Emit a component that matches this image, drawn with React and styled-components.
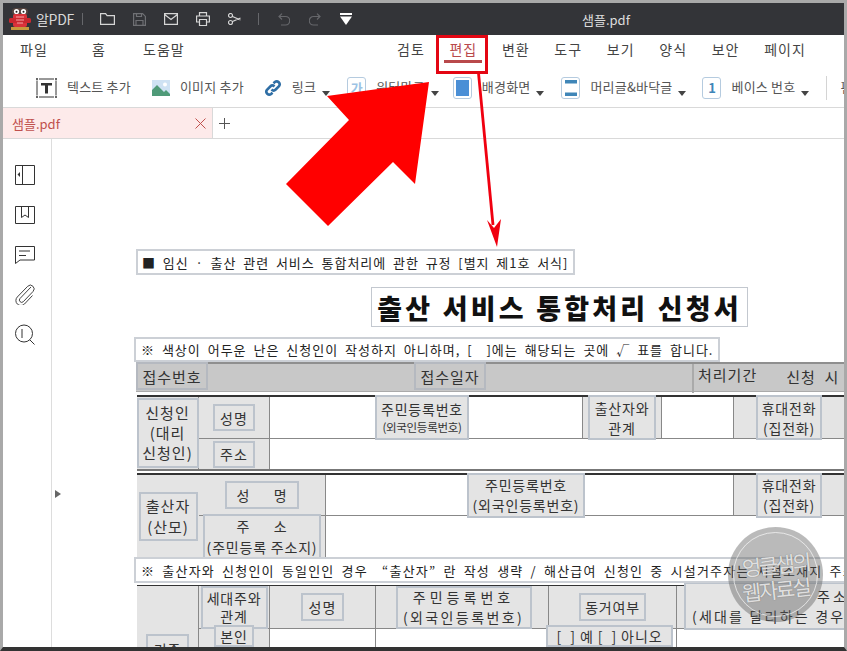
import styled, { createGlobalStyle } from "styled-components";

const GlobalStyle = createGlobalStyle`
  html, body { margin: 0; padding: 0; background: #fff; }
  body { font-family: "Noto Sans CJK KR", "Noto Sans", sans-serif; color: #333; }
`;

const menu_left = [
  { id: 0, name: "파일", width: 72 },
  { id: 1, name: "홈", width: 51 },
  { id: 2, name: "도움말", width: 60 },
];
const menu_right = ["검토", "편집", "변환", "도구", "보기", "양식", "보안", "페이지"];

const Stage = styled.div`
  position: relative;
  width: 847px;
  height: 651px;
  overflow: hidden;
`;
const Frame = styled.div`
  box-sizing: border-box;
  width: 847px;
  height: 651px;
  display: flex;
  flex-direction: column;
  border: 3px solid #a9a9a9;
  border-bottom: 4px solid #333;
  background: #fff;
`;

/* title bar */
const TitleBar = styled.header`
  flex: none;
  height: 32px;
  display: flex;
  align-items: center;
  background: #333438;
  color: #e8e8e8;
`;
const LogoSlot = styled.span`
  display: flex;
  margin-left: 6px;
`;
const AppName = styled.span`
  margin-left: 5px;
  font-size: 14px;
  letter-spacing: -0.3px;
  color: #d8d8d8;
`;
const BarDivider = styled.i`
  width: 1px;
  height: 12px;
  margin: ${({ $margin }) => $margin};
  background: #66676b;
`;
const BarIcons = styled.div`
  display: flex;
  align-items: center;
  gap: ${({ $gap }) => $gap}px;
`;
const FileTitle = styled.div`
  flex: 1;
  padding-left: 16px;
  text-align: center;
  font-size: 13px;
  color: #ddd;
`;

/* menu */
const MenuBar = styled.nav`
  flex: none;
  box-sizing: border-box;
  height: 33px;
  display: flex;
  align-items: center;
  padding: 0 0 6px 17px;
  font-size: 14px;
  letter-spacing: 1px;
  color: #444;
`;
const MenuLeft = styled.span`
  width: ${({ $width }) => $width}px;
`;
const MenuRight = styled.ul`
  display: flex;
  gap: 24.7px;
  margin: 0 0 0 194px;
  padding: 0;
  list-style: none;
`;
const MenuItem = styled.li`
  position: relative;
  color: ${({ $active }) => ($active ? "#b9494b" : "#444")};
  &::after {
    content: "";
    display: ${({ $active }) => ($active ? "block" : "none")};
    position: absolute;
    left: -5px;
    right: -5px;
    bottom: -4px;
    height: 3px;
    background: #b9494b;
  }
`;

/* toolbar */
const ToolBar = styled.div`
  flex: none;
  height: 39px;
  display: flex;
  align-items: center;
  padding-left: 33px;
  border-bottom: 1px solid #d9d9d9;
  overflow: hidden;
  white-space: nowrap;
`;
const ToolItem = styled.div`
  flex: none;
  display: flex;
  align-items: center;
  margin-right: ${({ $gap }) => $gap}px;
`;
const ToolLabel = styled.span`
  margin-left: 10px;
  font-size: 13px;
  letter-spacing: 0.2px;
  color: #555;
  transform: translateY(-1px);
`;
const Caret = styled.i`
  width: 0;
  height: 0;
  margin: 12px 0 0 6px;
  border-left: 4.5px solid transparent;
  border-right: 4.5px solid transparent;
  border-top: 5px solid #444;
`;
const ToolDivider = styled.i`
  flex: none;
  width: 1px;
  height: 24px;
  margin-right: 3px;
  background: #d4d4d4;
`;
const IconTile = styled.span`
  box-sizing: border-box;
  width: 19px;
  height: 22px;
  display: flex;
  align-items: center;
  justify-content: center;
  border: 1px solid #b5cbdf;
  border-radius: 3px;
  font-size: 13px;
  font-weight: 700;
  color: ${({ $color = "#3f86b8" }) => $color};
`;

/* tabs */
const TabBar = styled.div`
  flex: none;
  height: 30px;
  display: flex;
  align-items: center;
  border-bottom: 1px solid #d9d9d9;
`;
const ActiveTab = styled.div`
  box-sizing: border-box;
  width: 210px;
  height: 100%;
  display: flex;
  align-items: center;
  justify-content: space-between;
  padding: 0 6px 0 9px;
  background: #fdeaea;
  border-right: 1px solid #d9d9d9;
  font-size: 13px;
  color: #c0504d;
`;
const AddTab = styled.div`
  margin-left: 6px;
  display: flex;
`;

/* workspace */
const Workspace = styled.div`
  flex: 1;
  min-height: 0;
  display: flex;
`;
const SideRail = styled.aside`
  flex: none;
  box-sizing: border-box;
  width: 49px;
  display: flex;
  flex-direction: column;
  align-items: center;
  gap: 15px;
  padding: 23px 5px 0 0;
  border-right: 1px solid #ddd;
`;
const RailIcon = styled.span`
  display: flex;
  width: 25px;
  height: 25px;
  align-items: center;
  justify-content: center;
`;
const Handle = styled.i`
  position: absolute;
  left: 55px;
  top: 490px;
  width: 0;
  height: 0;
  border-top: 4px solid transparent;
  border-bottom: 4px solid transparent;
  border-left: 6px solid #666;
`;

/* pdf page */
const Page = styled.main`
  flex: 1;
  min-width: 0;
  overflow: hidden;
  padding-top: 110px;
  color: #222;
  font-size: 14px;
`;
const Notice = styled.div`
  box-sizing: border-box;
  width: ${({ $width }) => $width}px;
  height: ${({ $height = 26 }) => $height}px;
  margin-left: ${({ $left }) => $left}px;
  display: flex;
  align-items: center;
  padding-left: ${({ $pad = 5 }) => $pad}px;
  border: 2px solid #ccd0d6;
  background: #fff;
  font-size: 13px;
  letter-spacing: ${({ $spacing = 1.2 }) => $spacing}px;
  word-spacing: 3px;
  white-space: pre;
  overflow: hidden;
  position: relative;
  z-index: 2;
  color: #222;
`;
const DocTitle = styled.h1`
  box-sizing: border-box;
  width: 377px;
  height: 40px;
  margin: 12px 0 10px 319px;
  display: flex;
  align-items: center;
  justify-content: center;
  border: 1px solid #c3c8cf;
  font-size: 27px;
  font-weight: 900;
  letter-spacing: 3.2px;
  color: #111;
  white-space: pre;
`;
const ReceiptRow = styled.div`
  box-sizing: border-box;
  height: 30px;
  margin-left: 84px;
  display: flex;
  align-items: flex-start;
  background: #c8c8c8;
  border-top: 2px solid #8f8f8f;
  border-bottom: 1px solid #aaa;
  font-size: 15px;
  letter-spacing: 1px;
`;
const ReceiptLabel = styled.span`
  box-sizing: border-box;
  flex: none;
  width: 72px;
  height: 28px;
  margin: -2px 0 0 ${({ $left }) => $left}px;
  display: flex;
  align-items: center;
  justify-content: center;
  border: 2px solid #b5b9c0;
  color: #333;
`;
const ReceiptText = styled.span`
  flex: none;
  margin-left: ${({ $left }) => $left}px;
  padding: ${({ $pad = 0 }) => $pad}px 0 0 ${({ $indent = 0 }) => $indent}px;
  border-left: ${({ $line }) => ($line ? "2px solid #aaa" : "none")};
  height: 100%;
  line-height: 18px;
  color: #333;
  white-space: pre;
`;
const FormGrid = styled.section`
  display: grid;
  grid-template-columns: ${({ $cols }) => $cols};
  grid-template-rows: ${({ $rows }) => $rows};
  margin: ${({ $margin }) => $margin};
  border-top: ${({ $top = "2px solid #333" }) => $top};
  border-bottom: ${({ $bottom = "none" }) => $bottom};
  line-height: 1.3;
  letter-spacing: 0.6px;
  color: #333;
`;
const Cell = styled.div`
  display: flex;
  min-width: 0;
  align-items: ${({ $align = "center" }) => $align};
  justify-content: ${({ $justify = "center" }) => $justify};
  background: ${({ $white }) => ($white ? "#fff" : "#e4e4e4")};
  grid-column: ${({ $span = 1 }) => `span ${$span}`};
  grid-row: ${({ $rows = 1 }) => `span ${$rows}`};
  border-right: ${({ $right }) => ($right ? "1px solid #888" : "none")};
  border-bottom: ${({ $under }) => ($under ? "1px solid #888" : "none")};
`;
const FieldLabel = styled.div`
  box-sizing: border-box;
  flex: none;
  width: ${({ $w }) => $w}px;
  height: ${({ $h }) => $h}px;
  margin: ${({ $margin = 0 }) => $margin};
  display: flex;
  flex-direction: column;
  align-items: center;
  justify-content: center;
  border: 2px solid #bcc3cc;
  background: #e4e4e4;
  position: relative;
  text-align: center;
  white-space: pre;
  font-size: ${({ $size = 14 }) => $size}px;
  line-height: ${({ $lead = 18 }) => $lead}px;
  letter-spacing: ${({ $spacing = 0.8 }) => $spacing}px;
`;
const Small = styled.span`
  font-size: 11.5px;
  letter-spacing: -0.3px;
`;
const WideLine = styled.span`
  letter-spacing: ${({ $spacing }) => $spacing}px;
`;
const AddressLine = styled.span`
  align-self: flex-start;
  margin-left: ${({ $left }) => $left}px;
  letter-spacing: ${({ $spacing }) => $spacing}px;
`;

/* things drawn over the screenshot */
const Annotations = styled.svg`
  position: absolute;
  inset: 0;
  z-index: 6;
  width: 847px;
  height: 651px;
  pointer-events: none;
`;
const Watermark = styled.div`
  position: absolute;
  left: 728px;
  top: 527px;
  z-index: 5;
  box-sizing: border-box;
  width: 95px;
  height: 95px;
  padding-top: 5px;
  display: flex;
  flex-direction: column;
  align-items: center;
  justify-content: center;
  border-radius: 50%;
  background: rgba(90, 90, 90, 0.42);
  font-size: 21px;
  line-height: 25px;
  color: rgba(255, 255, 255, 0.8);
  text-shadow: 0 0 1px #666;
  letter-spacing: -2.5px;
  &::after {
    content: "";
    position: absolute;
    inset: 5px;
    border: 1px solid rgba(255, 255, 255, 0.65);
    border-radius: 50%;
  }
`;
const WatermarkLine = styled.span`
  transform: rotate(-6deg);
`;

const Line = ({ d, w = 16, h = 16, c = "#d6d6d6", sw = 1.2 }) => (
  <svg width={w} height={h} viewBox={`0 0 ${w} ${h}`} fill="none" stroke={c} strokeWidth={sw}>
    <path d={d} />
  </svg>
);

const Logo = () => (
  <svg width="22" height="22" viewBox="0 0 22 22">
    <rect x="3" y="0" width="16" height="7" rx="3.5" fill="#55443f" />
    <circle cx="7.5" cy="3.5" r="2.6" fill="#fff" />
    <circle cx="14.5" cy="3.5" r="2.6" fill="#fff" />
    <circle cx="7.5" cy="3.8" r="1" fill="#222" />
    <circle cx="14.5" cy="3.8" r="1" fill="#222" />
    <rect x="4" y="6" width="14" height="13" rx="2" fill="#d9333a" />
    <rect x="0" y="10" width="22" height="5" rx="1.5" fill="#c9282f" />
    <path d="M7 9h8M7 12h8M8 15h6" stroke="#f3a6a6" strokeWidth="1" />
    <rect x="2" y="19" width="18" height="3" fill="#c79a3c" />
  </svg>
);

const TextIcon = () => (
  <svg width="21" height="20" viewBox="0 0 21 20" fill="none">
    <path d="M1 2.5v15M20 2.5v15M3 1h15M3 19h15" stroke="#333" strokeWidth="1" />
    <g fill="#333">
      <circle cx="1" cy="1" r="1" />
      <circle cx="20" cy="1" r="1" />
      <circle cx="1" cy="19" r="1" />
      <circle cx="20" cy="19" r="1" />
    </g>
    <path d="M5 5h11v2.6h-4v8h-3v-8H5z" fill="#333" />
  </svg>
);
const ImageIcon = () => (
  <svg width="18" height="16" viewBox="0 0 18 16">
    <rect width="18" height="16" fill="#cfe2f3" />
    <circle cx="13" cy="4.5" r="2" fill="#fff" />
    <path d="M0 16V10l5-5 7 7 2-2 4 4v2z" fill="#4f9a78" />
  </svg>
);
const LinkIcon = () => (
  <svg width="18" height="18" viewBox="0 0 18 18" fill="none" stroke="#2f6ea5" strokeWidth="2.6">
    <path d="M7.5 10.5a3 3 0 0 0 4.2 0l3.3-3.3a3 3 0 0 0-4.2-4.2L9.5 4.3" />
    <path d="M10.5 7.5a3 3 0 0 0-4.2 0L3 10.8A3 3 0 0 0 7.2 15l1.3-1.3" />
  </svg>
);
const HeaderFooterIcon = () => (
  <svg width="12" height="16" viewBox="0 0 12 16">
    <rect width="12" height="3.5" fill="#3f86b8" />
    <rect y="12.5" width="12" height="3.5" fill="#3f86b8" />
  </svg>
);
const BackgroundIcon = () => (
  <svg width="13" height="16" viewBox="0 0 13 16">
    <rect width="13" height="16" fill="#4a8fd6" />
  </svg>
);

const rail_icons = [
  <svg key="panel" width="20" height="20" viewBox="0 0 20 20" fill="none" stroke="#333">
    <path d="M.5.5h19v19H.5zM7.5.5v19" />
    <path d="M5 7v5L2.5 9.5z" fill="#333" stroke="none" />
  </svg>,
  <svg key="mark" width="20" height="18" viewBox="0 0 20 18" fill="none" stroke="#333">
    <path d="M.5.5h19v17H.5zM6.5.5v11l3.5-2.5 3.5 2.5V.5" />
  </svg>,
  <svg key="note" width="20" height="18" viewBox="0 0 20 18" fill="none" stroke="#333">
    <path d="M.5.5h19v13.5H5L.5 17.5zM4 5h11M4 9.5h7" />
  </svg>,
  <svg key="clip" width="20" height="21" viewBox="0 0 20 21" fill="none" stroke="#444">
    <path d="M16 3 5 14.5a2.3 2.3 0 0 0 3.3 3.2L18 7.5a3.7 3.7 0 0 0-5.3-5.2L2.3 13a5 5 0 0 0 7.2 7l8-8.5" />
  </svg>,
  <svg key="find" width="20" height="21" viewBox="0 0 20 21" fill="none" stroke="#333">
    <circle cx="9" cy="9.5" r="8.5" />
    <path d="M7 5v9M15 16l4.5 4.5" />
  </svg>,
];

export default function App() {
  return (
    <>
      <GlobalStyle />
      <Stage>
        <Frame>
          <TitleBar>
            <LogoSlot>
              <Logo />
            </LogoSlot>
            <AppName>알PDF</AppName>
            <BarDivider $margin="0 17px 0 8px" />
            <BarIcons $gap={18}>
              <Line w={15} h={12} d="M.6.6h5l1.5 2h7.3v8.8H.6z" />
              <Line w={13} h={13} c="#6f7074" d="M.6.6h9l2.8 2.8v9H.6zM3 12V7.5h7V12M3.5 1v2.5h5V1" />
              <Line w={14} h={12} d="M.6.6h12.8v10.8H.6zM.6 1.5 7 6.5l6.4-5" />
              <Line w={14} h={14} d="M3.5 4V.6h7V4M3.5 10H.6V4h12.8v6h-2.900M3.5 7.5h7v6h-7z" />
              <Line w={13} h={12} d="M4.5 3.5 12.5 7M4.5 8.5 12.5 5M4.5 2.500a2 2 0 1 1-4 0 2 2 0 0 1 4 0zM4.5 9.500a2 2 0 1 1-4 0 2 2 0 0 1 4 0z" />
            </BarIcons>
            <BarDivider $margin="0 19px 0 17px" />
            <BarIcons $gap={19}>
              <Line w={12} h={13} c="#66676b" d="M4 .6 1 3.5l3 3M1 3.5h6.5a4 4 0 0 1 0 8.5H3" />
              <Line w={12} h={13} c="#66676b" d="M8 .6l3 2.9-3 3M11 3.5H4.5a4 4 0 0 0 0 8.5H9" />
              <svg width="12" height="12" viewBox="0 0 12 12" fill="#fff">
                <rect width="12" height="2" />
                <path d="M0 3.5h12L6 12z" />
              </svg>
            </BarIcons>
            <FileTitle>샘플.pdf</FileTitle>
          </TitleBar>

          <MenuBar>
            {menu_left.map((m) => (
              <MenuLeft key={m.id} $width={m.width}>
                {m.name}
              </MenuLeft>
            ))}
            <MenuRight>
              {menu_right.map((name) => (
                <MenuItem key={name} $active={name === "편집"}>
                  {name}
                </MenuItem>
              ))}
            </MenuRight>
          </MenuBar>

          <ToolBar>
            <ToolItem $gap={21}>
              <TextIcon />
              <ToolLabel>텍스트 추가</ToolLabel>
            </ToolItem>
            <ToolItem $gap={20}>
              <ImageIcon />
              <ToolLabel>이미지 추가</ToolLabel>
            </ToolItem>
            <ToolItem $gap={17}>
              <LinkIcon />
              <ToolLabel>링크</ToolLabel>
              <Caret />
            </ToolItem>
            <ToolItem $gap={14}>
              <IconTile $color="#9cc3e4">가</IconTile>
              <ToolLabel>워터마크</ToolLabel>
              <Caret />
            </ToolItem>
            <ToolItem $gap={17}>
              <IconTile>
                <BackgroundIcon />
              </IconTile>
              <ToolLabel>배경화면</ToolLabel>
              <Caret />
            </ToolItem>
            <ToolItem $gap={16}>
              <IconTile>
                <HeaderFooterIcon />
              </IconTile>
              <ToolLabel>머리글&바닥글</ToolLabel>
              <Caret />
            </ToolItem>
            <ToolItem $gap={17}>
              <IconTile>1</IconTile>
              <ToolLabel>베이스 번호</ToolLabel>
              <Caret />
            </ToolItem>
            <ToolDivider />
            <ToolLabel>편</ToolLabel>
          </ToolBar>

          <TabBar>
            <ActiveTab>
              샘플.pdf
              <Line w={11} h={11} c="#c0504d" sw={1} d="M.5.5l10 10M10.5.5l-10 10" />
            </ActiveTab>
            <AddTab>
              <Line w={11} h={11} c="#555" sw={1} d="M5.5 0v11M0 5.5h11" />
            </AddTab>
          </TabBar>

          <Workspace>
            <SideRail>
              {rail_icons.map((icon) => (
                <RailIcon key={icon.key}>{icon}</RailIcon>
              ))}
            </SideRail>
            <Page>
              <Notice $left={84} $width={439} $pad={4} $spacing={0.95}>
                {"■ 임신 · 출산 관련 서비스 통합처리에 관한 규정 [별지 제1호 서식]"}
              </Notice>
              <DocTitle>{"출산 서비스 통합처리 신청서"}</DocTitle>
              <Notice $left={82} $width={586} $height={25} $spacing={1}>
                {"※ 색상이 어두운 난은 신청인이 작성하지 아니하며, [  ]에는 해당되는 곳에 √ 표를 합니다."}
              </Notice>

              <ReceiptRow>
                <ReceiptLabel $left={0}>접수번호</ReceiptLabel>
                <ReceiptLabel $left={206}>접수일자</ReceiptLabel>
                <ReceiptText $left={206} $line $indent={4} $pad={2}>
                  처리기간
                </ReceiptText>
                <ReceiptText $left={29} $pad={4}>
                  {"신청  시"}
                </ReceiptText>
              </ReceiptRow>

              <FormGrid
                $cols="62px 71px 313px 79px 72px 110px"
                $rows="42px 30px"
                $margin="3px 0 0 85px"
                $bottom="2px solid #777"
              >
                <Cell $rows={2} $right>
                  <FieldLabel $w={62} $h={70} $size={15} $spacing={1} $lead={20}>
                    {"신청인\n(대리\n신청인)"}
                  </FieldLabel>
                </Cell>
                <Cell $right $under>
                  <FieldLabel $w={42} $h={27} $spacing={1}>
                    성명
                  </FieldLabel>
                </Cell>
                <Cell $white $under $right $justify="flex-start">
                  <FieldLabel $w={94} $h={45} $margin="0 0 0 105px">
                    주민등록번호
                    <Small>(외국인등록번호)</Small>
                  </FieldLabel>
                </Cell>
                <Cell $under $right>
                  <FieldLabel $w={68} $h={45} $lead={20}>
                    {"출산자와\n관계"}
                  </FieldLabel>
                </Cell>
                <Cell $white $under $right />
                <Cell $under>
                  <FieldLabel $w={66} $h={45} $lead={20}>
                    {"휴대전화\n(집전화)"}
                  </FieldLabel>
                </Cell>
                <Cell $right>
                  <FieldLabel $w={42} $h={27} $spacing={1}>
                    주소
                  </FieldLabel>
                </Cell>
                <Cell $white $span={4} />
              </FormGrid>

              <FormGrid
                $cols="62px 127px 408px 110px"
                $rows="41px 41px"
                $margin="2px 0 0 85px"
              >
                <Cell $rows={2}>
                  <FieldLabel $w={59} $h={49} $size={15} $spacing={1} $lead={21}>
                    {"출산자\n(산모)"}
                  </FieldLabel>
                </Cell>
                <Cell $under $right>
                  <FieldLabel $w={74} $h={28}>
                    {"성      명"}
                  </FieldLabel>
                </Cell>
                <Cell $white $under $right $justify="flex-start">
                  <FieldLabel $w={118} $h={45} $margin="0 0 0 141px" $lead={20}>
                    주민등록번호
                    <span>(외국인등록번호)</span>
                  </FieldLabel>
                </Cell>
                <Cell $under>
                  <FieldLabel $w={66} $h={45} $lead={20}>
                    {"휴대전화\n(집전화)"}
                  </FieldLabel>
                </Cell>
                <Cell $right>
                  <FieldLabel $w={118} $h={46} $lead={21}>
                    {"주      소\n(주민등록 주소지)"}
                  </FieldLabel>
                </Cell>
                <Cell $white $span={2} />
              </FormGrid>

              <Notice $left={82} $width={720} $height={26}>
                {"※ 출산자와 신청인이 동일인인 경우  “출산자” 란 작성 생략 / 해산급여 신청인 중 시설거주자는 시설소재지 주소"}
              </Notice>

              <FormGrid
                $cols="62px 71px 106px 173px 128px 167px"
                $rows="43px 40px"
                $margin="2px 0 0 85px"
                $top="1px solid #333"
              >
                <Cell $rows={2} $right $align="flex-start">
                  <FieldLabel $w={43} $h={30} $margin="48px 0 0 0">
                    기준
                  </FieldLabel>
                </Cell>
                <Cell $under $right>
                  <FieldLabel $w={67} $h={43}>
                    {"세대주와\n관계"}
                  </FieldLabel>
                </Cell>
                <Cell $under $right>
                  <FieldLabel $w={43} $h={28} $spacing={1}>
                    성명
                  </FieldLabel>
                </Cell>
                <Cell $under $right>
                  <FieldLabel $w={136} $h={43} $margin="0 0 0 3px" $lead={20}>
                    <WideLine $spacing={4}>주민등록번호</WideLine>
                    <WideLine $spacing={2.4}>(외국인등록번호)</WideLine>
                  </FieldLabel>
                </Cell>
                <Cell $under $right>
                  <FieldLabel $w={67} $h={28}>
                    동거여부
                  </FieldLabel>
                </Cell>
                <Cell $under $justify="flex-start">
                  <FieldLabel $w={175} $h={48} $margin="-2px 0 0 7px" $lead={20}>
                    <AddressLine $left={131} $spacing={3}>
                      주소
                    </AddressLine>
                    <AddressLine $left={6} $spacing={2.2}>
                      (세대를 달리하는 경우
                    </AddressLine>
                  </FieldLabel>
                </Cell>
                <Cell $right $align="flex-start">
                  <FieldLabel $w={40} $h={22} $margin="-4px 0 0 0">
                    본인
                  </FieldLabel>
                </Cell>
                <Cell $white $right />
                <Cell $white $right />
                <Cell $white $right $align="flex-start">
                  <FieldLabel $w={127} $h={22} $margin="-4px 0 0 -6px" $spacing={0.9}>
                    {"[  ] 예 [  ] 아니오"}
                  </FieldLabel>
                </Cell>
                <Cell $white />
              </FormGrid>
            </Page>
          </Workspace>
        </Frame>

        <Handle />
        <Watermark>
          <WatermarkLine>엉클샘의</WatermarkLine>
          <WatermarkLine>웹자료실</WatermarkLine>
        </Watermark>
        <Annotations viewBox="0 0 847 651">
          <rect x="437.5" y="36.5" width="49" height="36" fill="none" stroke="#e30613" strokeWidth="3" />
          <path d="M478.5 73 493 225" stroke="#f00010" strokeWidth="2.8" fill="none" />
          <polygon points="487,220 494,228 501,219 497,247" fill="#f00010" />
          <polygon
            points="327,96 429,82 415,184 393,162 328,226 286,184 349,120"
            fill="#ff0000"
          />
        </Annotations>
      </Stage>
    </>
  );
}
